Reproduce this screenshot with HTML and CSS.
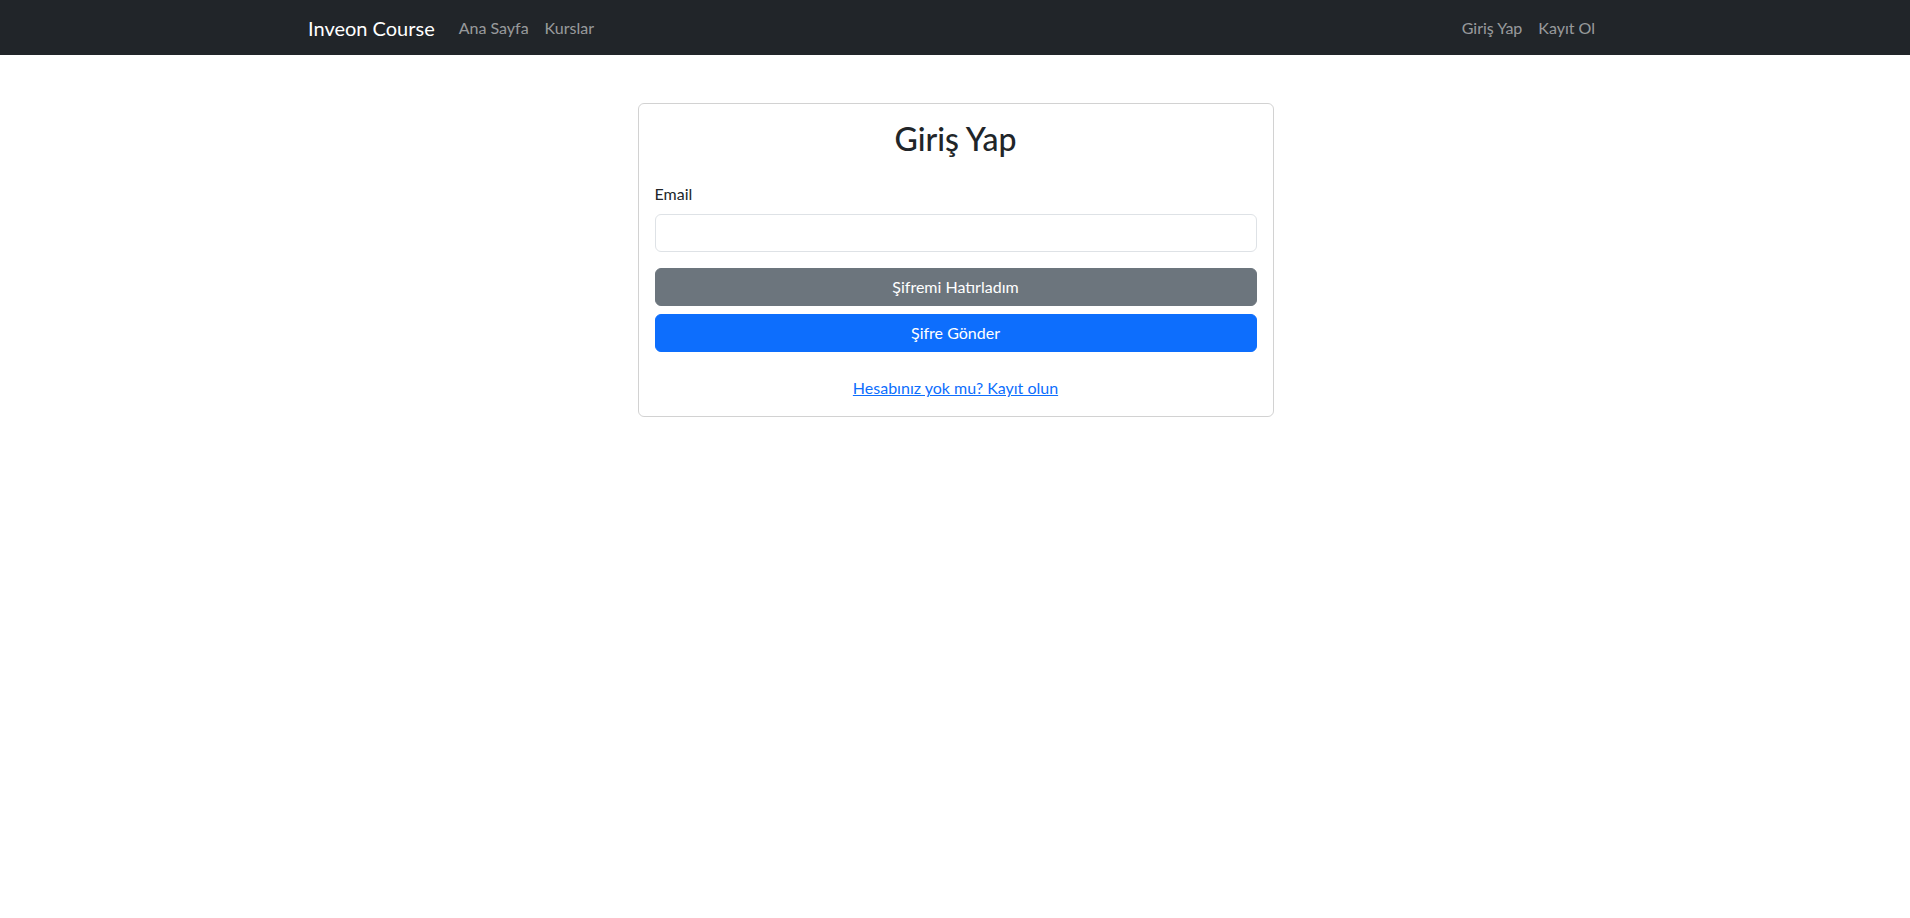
FILE: index.html
```html
<!DOCTYPE html>
<html lang="tr">
<head>
<meta charset="utf-8">
<title>Giriş Yap - Inveon Course</title>
<link rel="stylesheet" href="styles.css">
</head>
<body>
<nav class="navbar">
  <div class="nav-container">
    <a class="brand" href="#">Inveon Course</a>
    <ul class="nav-list nav-left">
      <li><a class="nav-link" href="#">Ana Sayfa</a></li>
      <li><a class="nav-link" href="#">Kurslar</a></li>
    </ul>
    <ul class="nav-list">
      <li><a class="nav-link" href="#">Giriş Yap</a></li>
      <li><a class="nav-link" href="#">Kayıt Ol</a></li>
    </ul>
  </div>
</nav>
<main class="page">
  <div class="card">
    <h2 class="card-title">Giriş Yap</h2>
    <form class="form">
      <label class="form-label" for="email">Email</label>
      <input class="form-control" id="email" type="email">
      <button type="button" class="btn btn-secondary">Şifremi Hatırladım</button>
      <button type="submit" class="btn btn-primary">Şifre Gönder</button>
    </form>
    <div class="register">
      <a href="#" class="register-link">Hesabınız yok mu? Kayıt olun</a>
    </div>
  </div>
</main>
</body>
</html>
```
FILE: styles.css
```css
* { box-sizing: border-box; }
html, body { margin: 0; padding: 0; }
body {
  font-family: "Segoe UI", Lato, "Noto Sans", sans-serif;
  font-size: 16px;
  line-height: 1.5;
  color: #212529;
  background: #fff;
}
.navbar {
  background: #212529;
  height: 55px;
  display: flex;
  align-items: center;
}
.nav-container {
  width: 1320px;
  margin: 0 auto;
  padding: 0 12px 0 13px;
  display: flex;
  align-items: center;
}
.brand {
  color: #fff;
  text-decoration: none;
  font-size: 20px;
  line-height: 30px;
  margin-right: 16px;
}
.nav-list {
  list-style: none;
  margin: 0;
  padding: 0;
  display: flex;
}
.nav-left { flex: 1; }
.nav-link {
  display: block;
  padding: 8px;
  color: rgba(255,255,255,0.55);
  text-decoration: none;
  line-height: 24px;
}
.page {
  display: flex;
  justify-content: center;
  padding-top: 48px;
  padding-left: 1px;
}
.card {
  width: 636px;
  border: 1px solid rgba(0,0,0,0.175);
  border-radius: 6px;
  padding: 16px;
}
.card-title {
  margin: 0 0 24px;
  font-size: 32px;
  font-weight: 500;
  line-height: 38px;
  text-align: center;
}
.form {
  display: flex;
  flex-direction: column;
}
.form-label {
  display: block;
  margin-bottom: 8px;
  line-height: 24px;
}
.form-control {
  height: 38px;
  border: 1px solid #dee2e6;
  border-radius: 6px;
  padding: 6px 12px;
  font: inherit;
  margin-bottom: 16px;
}
.btn {
  height: 38px;
  border: 1px solid transparent;
  border-radius: 6px;
  font: inherit;
  color: #fff;
  padding: 6px 12px;
}
.btn-secondary { background: #6c757d; border-color: #6c757d; margin-bottom: 8px; }
.btn-primary { background: #0d6efd; border-color: #0d6efd; }
.register {
  margin-top: 24px;
  text-align: center;
}
.register-link { color: #0d6efd; text-decoration: underline; }
```
